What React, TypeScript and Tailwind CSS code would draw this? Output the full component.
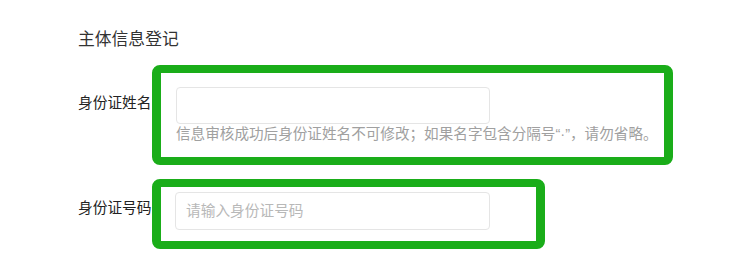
import React from 'react';

const boxClass = 'border-x-[9px] border-y-[8px] border-[#1aad19] rounded-[8px] bg-white';
const inputClass =
  'block h-[37px] border border-[#e5e5e5] rounded-[4px] px-[10px] text-[14.7px] text-[#333] placeholder:text-[#b8b8b8] outline-none bg-white';

export default function App() {
  return (
    <div className="w-[734px] h-[260px] bg-white overflow-hidden font-['Liberation_Sans','Noto_Sans_CJK_SC',sans-serif] pl-[78px] pt-[28px]">
      <h1 className="text-[16.8px] leading-[24px] text-[#333] font-normal">主体信息登记</h1>

      <div className="flex items-start mt-[13px]">
        <label className="w-[74px] mt-[28px] text-[14.7px] leading-[20px] text-[#222] whitespace-nowrap">身份证姓名</label>
        <div className={`${boxClass} w-[521px] pt-[14px] pl-[15px] pb-[13px]`}>
          <input className={`${inputClass} w-[314px]`} />
          <p className="text-[14.6px] leading-[20px] text-[#a0a0a0] whitespace-nowrap">
            信息审核成功后身份证姓名不可修改；如果名字包含分隔号“·”，请勿省略。
          </p>
        </div>
      </div>

      <div className="flex items-start mt-[14px]">
        <label className="w-[74px] mt-[19px] text-[14.7px] leading-[20px] text-[#222] whitespace-nowrap">身份证号码</label>
        <div className={`${boxClass} w-[393px] pt-[5px] pl-[14px] pb-[11px]`}>
          <input className={`${inputClass} w-[315px] h-[38px]`} placeholder="请输入身份证号码" />
        </div>
      </div>
    </div>
  );
}
